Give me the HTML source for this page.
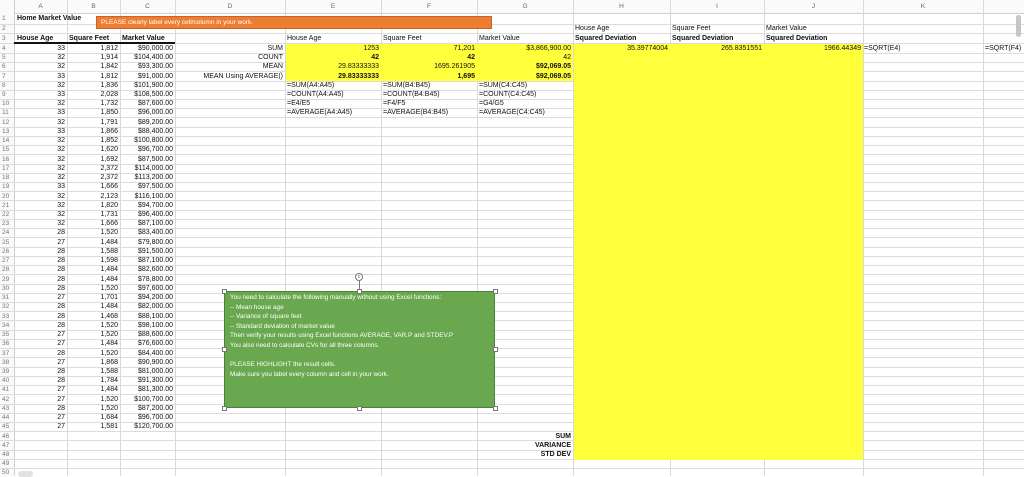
<!DOCTYPE html>
<html><head><meta charset="utf-8"><style>
body{margin:0;width:1024px;height:476px;overflow:hidden;background:#fff;font-family:"Liberation Sans",sans-serif;font-size:7px;color:#111;position:relative}
.abs{position:absolute}
.vl{position:absolute;top:0;width:1px;height:476px;background:#d9d9d9}
.hl{position:absolute;left:0;width:1024px;height:1px;background:#dcdcdc}
.r{position:absolute;left:0;width:1024px;height:9px;line-height:9px}
.r span{position:absolute;white-space:nowrap}
.n{left:2px;color:#777;font-size:6.5px}
.a{left:14px;width:51px;text-align:right}
.b{left:67px;width:51px;text-align:right}
.c{left:120px;width:53px;text-align:right}
.d{left:175px;width:108px;text-align:right}
.e{left:285px;width:94px;text-align:right}
.f{left:381px;width:94px;text-align:right}
.g{left:477px;width:94px;text-align:right}
.h{left:573px;width:95px;text-align:right}
.i{left:670px;width:92px;text-align:right}
.j{left:764px;width:97px;text-align:right}
.el{left:287px}.fl{left:383px}.gl{left:479px}.hl2{left:575px}.il{left:672px}.jl{left:766px}.kl{left:864px}.ll{left:985px}
b{font-weight:bold}
.hd{position:absolute;top:0;height:13px;line-height:13px;text-align:center;color:#666;font-size:6.5px}
.hnd{position:absolute;width:5px;height:5px;background:#fff;border:1px solid #777;box-sizing:border-box}
</style></head><body>
<div class="abs" style="left:0;top:0;width:1024px;height:13px;background:#fafafa;border-bottom:1px solid #d0d0d0"></div>
<div class="abs" style="left:0;top:0;width:14px;height:476px;background:#fafafa;border-right:1px solid #d0d0d0"></div>
<div class="abs" style="left:285px;top:44px;width:288px;height:37px;background:#ffff3c"></div>
<div class="abs" style="left:573px;top:44px;width:290px;height:416px;background:#ffff3c"></div>
<div class="hl" style="top:24px"></div><div class="hl" style="top:33px"></div><div class="hl" style="top:43px"></div>
<div class="hl" style="top:53px"></div><div class="hl" style="top:62px"></div><div class="hl" style="top:71px"></div><div class="hl" style="top:81px"></div><div class="hl" style="top:90px"></div><div class="hl" style="top:99px"></div><div class="hl" style="top:108px"></div><div class="hl" style="top:117px"></div><div class="hl" style="top:127px"></div><div class="hl" style="top:136px"></div><div class="hl" style="top:145px"></div><div class="hl" style="top:154px"></div><div class="hl" style="top:164px"></div><div class="hl" style="top:173px"></div><div class="hl" style="top:182px"></div><div class="hl" style="top:191px"></div><div class="hl" style="top:200px"></div><div class="hl" style="top:210px"></div><div class="hl" style="top:219px"></div><div class="hl" style="top:228px"></div><div class="hl" style="top:237px"></div><div class="hl" style="top:247px"></div><div class="hl" style="top:256px"></div><div class="hl" style="top:265px"></div><div class="hl" style="top:274px"></div><div class="hl" style="top:284px"></div><div class="hl" style="top:293px"></div><div class="hl" style="top:302px"></div><div class="hl" style="top:311px"></div><div class="hl" style="top:320px"></div><div class="hl" style="top:330px"></div><div class="hl" style="top:339px"></div><div class="hl" style="top:348px"></div><div class="hl" style="top:357px"></div><div class="hl" style="top:367px"></div><div class="hl" style="top:376px"></div><div class="hl" style="top:385px"></div><div class="hl" style="top:394px"></div><div class="hl" style="top:404px"></div><div class="hl" style="top:413px"></div><div class="hl" style="top:422px"></div><div class="hl" style="top:431px"></div><div class="hl" style="top:440px"></div><div class="hl" style="top:450px"></div><div class="hl" style="top:459px"></div><div class="hl" style="top:468px"></div>
<div class="vl" style="left:67px"></div><div class="vl" style="left:120px"></div><div class="vl" style="left:175px"></div><div class="vl" style="left:285px"></div><div class="vl" style="left:381px"></div><div class="vl" style="left:477px"></div><div class="vl" style="left:573px"></div><div class="vl" style="left:670px"></div><div class="vl" style="left:764px"></div><div class="vl" style="left:863px"></div><div class="vl" style="left:983px"></div>
<div class="abs" style="left:286px;top:44px;width:287px;height:37px;background:#ffff3c"></div>
<div class="abs" style="left:574px;top:44px;width:289px;height:416px;background:#ffff3c"></div>
<div class="hd" style="left:14px;width:53px">A</div><div class="hd" style="left:67px;width:53px">B</div><div class="hd" style="left:120px;width:55px">C</div><div class="hd" style="left:175px;width:110px">D</div><div class="hd" style="left:285px;width:96px">E</div><div class="hd" style="left:381px;width:96px">F</div><div class="hd" style="left:477px;width:96px">G</div><div class="hd" style="left:573px;width:97px">H</div><div class="hd" style="left:670px;width:94px">I</div><div class="hd" style="left:764px;width:99px">J</div><div class="hd" style="left:863px;width:120px">K</div>
<div class="r" style="top:14px"><span class="n">1</span><span style="left:17px"><b>Home Market Value</b></span></div>
<div class="r" style="top:24px"><span class="n">2</span><span class="hl2">House Age</span><span class="il">Square Feet</span><span class="jl">Market Value</span></div>
<div class="r" style="top:34px"><span class="n">3</span><span style="left:17px"><b>House Age</b></span><span style="left:69px"><b>Square Feet</b></span><span style="left:122px"><b>Market Value</b></span><span class="el">House Age</span><span class="fl">Square Feet</span><span class="gl">Market Value</span><span class="hl2"><b>Squared Deviation</b></span><span class="il"><b>Squared Deviation</b></span><span class="jl"><b>Squared Deviation</b></span></div>
<div class="abs" style="left:14px;top:42px;width:161px;height:2px;background:#111"></div>
<div class="abs" style="left:96px;top:16px;width:396px;height:13px;background:#ed7d31;border:1px solid #c8622a;box-sizing:border-box;color:#fff;font-size:6.5px;line-height:11px;padding-left:4px">PLEASE clearly label every cell/column in your work.</div>
<div class="r" style="top:44px"><span class="n">4</span><span class="a">33</span><span class="b">1,812</span><span class="c">$90,000.00</span><span class="d">SUM</span><span class="e">1253</span><span class="f">71,201</span><span class="g">$3,866,900.00</span><span class="h">35.39774004</span><span class="i">265.8351551</span><span class="j">1966.44349</span><span class="kl">=SQRT(E4)</span><span class="ll">=SQRT(F4)</span></div>
<div class="r" style="top:53px"><span class="n">5</span><span class="a">32</span><span class="b">1,914</span><span class="c">$104,400.00</span><span class="d">COUNT</span><span class="e"><b>42</b></span><span class="f"><b>42</b></span><span class="g">42</span></div>
<div class="r" style="top:62px"><span class="n">6</span><span class="a">32</span><span class="b">1,842</span><span class="c">$93,300.00</span><span class="d">MEAN</span><span class="e">29.83333333</span><span class="f">1695.261905</span><span class="g"><b>$92,069.05</b></span></div>
<div class="r" style="top:72px"><span class="n">7</span><span class="a">33</span><span class="b">1,812</span><span class="c">$91,000.00</span><span class="d">MEAN Using AVERAGE()</span><span class="e"><b>29.83333333</b></span><span class="f"><b>1,695</b></span><span class="g"><b>$92,069.05</b></span></div>
<div class="r" style="top:81px"><span class="n">8</span><span class="a">32</span><span class="b">1,836</span><span class="c">$101,900.00</span><span class="el">=SUM(A4:A45)</span><span class="fl">=SUM(B4:B45)</span><span class="gl">=SUM(C4:C45)</span></div>
<div class="r" style="top:90px"><span class="n">9</span><span class="a">33</span><span class="b">2,028</span><span class="c">$108,500.00</span><span class="el">=COUNT(A4:A45)</span><span class="fl">=COUNT(B4:B45)</span><span class="gl">=COUNT(C4:C45)</span></div>
<div class="r" style="top:99px"><span class="n">10</span><span class="a">32</span><span class="b">1,732</span><span class="c">$87,600.00</span><span class="el">=E4/E5</span><span class="fl">=F4/F5</span><span class="gl">=G4/G5</span></div>
<div class="r" style="top:108px"><span class="n">11</span><span class="a">33</span><span class="b">1,850</span><span class="c">$96,000.00</span><span class="el">=AVERAGE(A4:A45)</span><span class="fl">=AVERAGE(B4:B45)</span><span class="gl">=AVERAGE(C4:C45)</span></div>
<div class="r" style="top:118px"><span class="n">12</span><span class="a">32</span><span class="b">1,791</span><span class="c">$89,200.00</span></div>
<div class="r" style="top:127px"><span class="n">13</span><span class="a">33</span><span class="b">1,866</span><span class="c">$88,400.00</span></div>
<div class="r" style="top:136px"><span class="n">14</span><span class="a">32</span><span class="b">1,852</span><span class="c">$100,800.00</span></div>
<div class="r" style="top:145px"><span class="n">15</span><span class="a">32</span><span class="b">1,620</span><span class="c">$96,700.00</span></div>
<div class="r" style="top:155px"><span class="n">16</span><span class="a">32</span><span class="b">1,692</span><span class="c">$87,500.00</span></div>
<div class="r" style="top:164px"><span class="n">17</span><span class="a">32</span><span class="b">2,372</span><span class="c">$114,000.00</span></div>
<div class="r" style="top:173px"><span class="n">18</span><span class="a">32</span><span class="b">2,372</span><span class="c">$113,200.00</span></div>
<div class="r" style="top:182px"><span class="n">19</span><span class="a">33</span><span class="b">1,666</span><span class="c">$97,500.00</span></div>
<div class="r" style="top:192px"><span class="n">20</span><span class="a">32</span><span class="b">2,123</span><span class="c">$116,100.00</span></div>
<div class="r" style="top:201px"><span class="n">21</span><span class="a">32</span><span class="b">1,820</span><span class="c">$94,700.00</span></div>
<div class="r" style="top:210px"><span class="n">22</span><span class="a">32</span><span class="b">1,731</span><span class="c">$96,400.00</span></div>
<div class="r" style="top:219px"><span class="n">23</span><span class="a">32</span><span class="b">1,666</span><span class="c">$87,100.00</span></div>
<div class="r" style="top:228px"><span class="n">24</span><span class="a">28</span><span class="b">1,520</span><span class="c">$83,400.00</span></div>
<div class="r" style="top:238px"><span class="n">25</span><span class="a">27</span><span class="b">1,484</span><span class="c">$79,800.00</span></div>
<div class="r" style="top:247px"><span class="n">26</span><span class="a">28</span><span class="b">1,588</span><span class="c">$91,500.00</span></div>
<div class="r" style="top:256px"><span class="n">27</span><span class="a">28</span><span class="b">1,598</span><span class="c">$87,100.00</span></div>
<div class="r" style="top:265px"><span class="n">28</span><span class="a">28</span><span class="b">1,484</span><span class="c">$82,600.00</span></div>
<div class="r" style="top:275px"><span class="n">29</span><span class="a">28</span><span class="b">1,484</span><span class="c">$78,800.00</span></div>
<div class="r" style="top:284px"><span class="n">30</span><span class="a">28</span><span class="b">1,520</span><span class="c">$97,600.00</span></div>
<div class="r" style="top:293px"><span class="n">31</span><span class="a">27</span><span class="b">1,701</span><span class="c">$94,200.00</span></div>
<div class="r" style="top:302px"><span class="n">32</span><span class="a">28</span><span class="b">1,484</span><span class="c">$82,000.00</span></div>
<div class="r" style="top:312px"><span class="n">33</span><span class="a">28</span><span class="b">1,468</span><span class="c">$88,100.00</span></div>
<div class="r" style="top:321px"><span class="n">34</span><span class="a">28</span><span class="b">1,520</span><span class="c">$98,100.00</span></div>
<div class="r" style="top:330px"><span class="n">35</span><span class="a">27</span><span class="b">1,520</span><span class="c">$88,600.00</span></div>
<div class="r" style="top:339px"><span class="n">36</span><span class="a">27</span><span class="b">1,484</span><span class="c">$76,600.00</span></div>
<div class="r" style="top:349px"><span class="n">37</span><span class="a">28</span><span class="b">1,520</span><span class="c">$84,400.00</span></div>
<div class="r" style="top:358px"><span class="n">38</span><span class="a">27</span><span class="b">1,868</span><span class="c">$90,900.00</span></div>
<div class="r" style="top:367px"><span class="n">39</span><span class="a">28</span><span class="b">1,588</span><span class="c">$81,000.00</span></div>
<div class="r" style="top:376px"><span class="n">40</span><span class="a">28</span><span class="b">1,784</span><span class="c">$91,300.00</span></div>
<div class="r" style="top:385px"><span class="n">41</span><span class="a">27</span><span class="b">1,484</span><span class="c">$81,300.00</span></div>
<div class="r" style="top:395px"><span class="n">42</span><span class="a">27</span><span class="b">1,520</span><span class="c">$100,700.00</span></div>
<div class="r" style="top:404px"><span class="n">43</span><span class="a">28</span><span class="b">1,520</span><span class="c">$87,200.00</span></div>
<div class="r" style="top:413px"><span class="n">44</span><span class="a">27</span><span class="b">1,684</span><span class="c">$96,700.00</span></div>
<div class="r" style="top:422px"><span class="n">45</span><span class="a">27</span><span class="b">1,581</span><span class="c">$120,700.00</span></div>
<div class="r" style="top:432px"><span class="n">46</span><span class="g"><b>SUM</b></span></div>
<div class="r" style="top:441px"><span class="n">47</span><span class="g"><b>VARIANCE</b></span></div>
<div class="r" style="top:450px"><span class="n">48</span><span class="g"><b>STD DEV</b></span></div>
<div class="r" style="top:459px"><span class="n">49</span></div>
<div class="r" style="top:468px"><span class="n">50</span></div>
<div class="abs" style="left:18px;top:471px;width:15px;height:6px;background:#e2e2e2;border-radius:3px"></div>
<div class="abs" style="left:1016px;top:15px;width:5px;height:22px;background:#c6c6c6;border-radius:3px"></div>
<div class="abs" style="left:224px;top:291px;width:271px;height:117px;background:#6aa84f;border:1px solid #4e7f3a;box-sizing:border-box;color:#fff;font-size:6.4px;line-height:9.6px;padding:1px 0 0 5px">You need to calculate the following manually without using Excel functions:<br>-- Mean house age<br>-- Variance of square feet<br>-- Standard deviation of market value<br>Then verify your results using Excel functions AVERAGE, VAR.P and STDEV.P<br>You also need to calculate CVs for all three columns.<br><br>PLEASE HIGHLIGHT the result cells.<br>Make sure you label every column and cell in your work.</div>
<div class="abs" style="left:359px;top:280px;width:1px;height:10px;background:#777"></div>
<div class="abs" style="left:355px;top:273px;width:8px;height:8px;border:1px solid #777;border-radius:50%;box-sizing:border-box;background:#fff;font-size:5px;line-height:6px;text-align:center;color:#555">c</div>
<div class="hnd" style="left:222px;top:289px"></div><div class="hnd" style="left:357px;top:289px"></div><div class="hnd" style="left:493px;top:289px"></div>
<div class="hnd" style="left:222px;top:347px"></div><div class="hnd" style="left:493px;top:347px"></div>
<div class="hnd" style="left:222px;top:406px"></div><div class="hnd" style="left:357px;top:406px"></div><div class="hnd" style="left:493px;top:406px"></div>
</body></html>
